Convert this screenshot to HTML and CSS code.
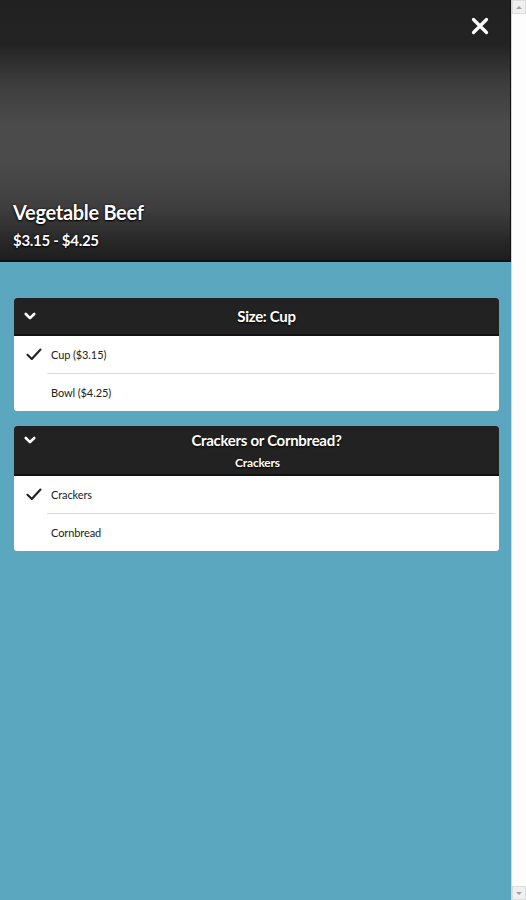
FILE: index.html
```html
<!DOCTYPE html>
<html>
<head>
<meta charset="utf-8">
<link rel="stylesheet" href="styles.css">
</head>
<body>
<div class="frame">
  <div class="main">
    <header class="hero">
      <button class="close" aria-label="Close">
        <svg width="18" height="18" viewBox="0 0 18 18"><path d="M2.5 2.5 L15.5 15.5 M15.5 2.5 L2.5 15.5" stroke="#fff" stroke-width="3.2" stroke-linecap="round"/></svg>
      </button>
      <div class="hero-text">
        <h1 class="item-name">Vegetable Beef</h1>
        <div class="item-price">$3.15 - $4.25</div>
      </div>
    </header>
    <section class="options">
      <div class="card">
        <div class="card-head">
          <svg class="chev" width="12" height="9" viewBox="0 0 12 9"><path d="M1.8 2 L6 6.2 L10.2 2" fill="none" stroke="#fff" stroke-width="2.6" stroke-linecap="round" stroke-linejoin="round"/></svg>
          <div class="head-text">
            <div class="head-title">Size: Cup</div>
          </div>
        </div>
        <ul class="choices">
          <li class="choice selected">
            <span class="check"><svg width="16" height="13" viewBox="0 0 16 13"><path d="M1.5 6.8 L5.8 11 L14.5 1.5" fill="none" stroke="#222" stroke-width="2.1" stroke-linecap="round" stroke-linejoin="round"/></svg></span>
            <span class="label">Cup ($3.15)</span>
          </li>
          <li class="choice">
            <span class="check"></span>
            <span class="label">Bowl ($4.25)</span>
          </li>
        </ul>
      </div>
      <div class="card">
        <div class="card-head two-line">
          <svg class="chev" width="12" height="9" viewBox="0 0 12 9"><path d="M1.8 2 L6 6.2 L10.2 2" fill="none" stroke="#fff" stroke-width="2.6" stroke-linecap="round" stroke-linejoin="round"/></svg>
          <div class="head-text">
            <div class="head-title">Crackers or Cornbread?</div>
            <div class="head-sub">Crackers</div>
          </div>
        </div>
        <ul class="choices">
          <li class="choice selected">
            <span class="check"><svg width="16" height="13" viewBox="0 0 16 13"><path d="M1.5 6.8 L5.8 11 L14.5 1.5" fill="none" stroke="#222" stroke-width="2.1" stroke-linecap="round" stroke-linejoin="round"/></svg></span>
            <span class="label">Crackers</span>
          </li>
          <li class="choice">
            <span class="check"></span>
            <span class="label">Cornbread</span>
          </li>
        </ul>
      </div>
    </section>
  </div>
  <div class="scrollbar">
    <div class="sb-btn"><span class="arr up"></span></div>
    <div class="sb-track"></div>
    <div class="sb-btn"><span class="arr down"></span></div>
  </div>
</div>
</body>
</html>
```

FILE: styles.css
```css
* { box-sizing: border-box; }
html, body { margin: 0; padding: 0; }
body {
  font-family: Lato, "Open Sans", "Liberation Sans", sans-serif;
  background: #fff;
  overflow: hidden;
}
.frame {
  display: flex;
  width: 526px;
  height: 900px;
}
.main {
  width: 511px;
  flex: none;
  background: #5ba7bf;
  display: flex;
  flex-direction: column;
}
.hero {
  height: 262px;
  flex: none;
  background: linear-gradient(to bottom, #212121 0%, #232323 17%, #3d3d3d 32%, #4b4b4b 48%, #4b4b4b 62%, #3e3e3e 80%, #262626 94%, #1e1e1e 100%);
  border-bottom: 2px solid #111;
  border-right: 1px solid #111;
  display: flex;
  flex-direction: column;
  padding: 0 13px 11px 13px;
}
.close {
  align-self: flex-end;
  margin: 17px 8px 0 0;
  padding: 0;
  border: 0;
  background: none;
  width: 18px;
  height: 18px;
  line-height: 0;
}
.hero-text {
  margin-top: auto;
}
.item-name {
  margin: 0;
  color: #fff;
  font-size: 20px;
  font-weight: 700;
  line-height: 24px;
  letter-spacing: -0.3px;
  text-shadow: 0 1px 2px #000, 0 0 2px #000;
}
.item-price {
  margin-top: 7px;
  color: #fff;
  font-size: 15px;
  font-weight: 700;
  line-height: 18px;
  letter-spacing: -0.3px;
  text-shadow: 0 1px 2px #000, 0 0 2px #000;
}
.options {
  padding: 36px 12px 0 14px;
  display: flex;
  flex-direction: column;
  gap: 15px;
}
.card {
  background: #fff;
  border-radius: 3px;
  overflow: hidden;
}
.card-head {
  background: #222;
  color: #fff;
  display: flex;
  align-items: center;
  padding: 9px 10px 9px 10px;
  border-bottom: 2px solid #111;
}
.card-head.two-line {
  padding: 5px 10px 3px 10px;
}
.chev {
  flex: none;
  align-self: flex-start;
  margin-top: 5px;
}
.head-text {
  flex: 1;
  text-align: center;
  padding-left: 8px;
}
.head-title {
  font-size: 15px;
  font-weight: 700;
  line-height: 18px;
  letter-spacing: -0.3px;
  text-shadow: 0 1px 2px #000;
}
.head-sub {
  font-size: 12px;
  font-weight: 700;
  line-height: 16px;
  margin-top: 6px;
  letter-spacing: -0.2px;
  padding-right: 18px;
  text-shadow: 0 1px 2px #000;
}
.choices {
  list-style: none;
  margin: 0;
  padding: 0;
}
.choice {
  display: flex;
  align-items: center;
  height: 37px;
  position: relative;
}
.choice + .choice {
  height: 38px;
}
.choice + .choice::before {
  content: "";
  position: absolute;
  left: 33px;
  right: 4px;
  top: 0;
  border-top: 1px solid #d9d9d9;
}
.check {
  width: 37px;
  flex: none;
  display: flex;
  justify-content: center;
  padding-left: 3px;
}
.label {
  font-size: 11px;
  color: #222;
  letter-spacing: -0.1px;
}
.scrollbar {
  width: 15px;
  flex: none;
  background: #fdfdfd;
  border-left: 1px solid #d6d6d6;
  display: flex;
  flex-direction: column;
}
.sb-btn {
  height: 14px;
  display: flex;
  align-items: center;
  justify-content: center;
  background: #f0f0f0;
  border: 1px solid #ddd;
}
.sb-track { flex: 1; }
.arr {
  width: 0;
  height: 0;
  border-left: 3px solid transparent;
  border-right: 3px solid transparent;
}
.arr.up { border-bottom: 3px solid #a3a3a3; }
.arr.down { border-top: 3px solid #a3a3a3; }
```
